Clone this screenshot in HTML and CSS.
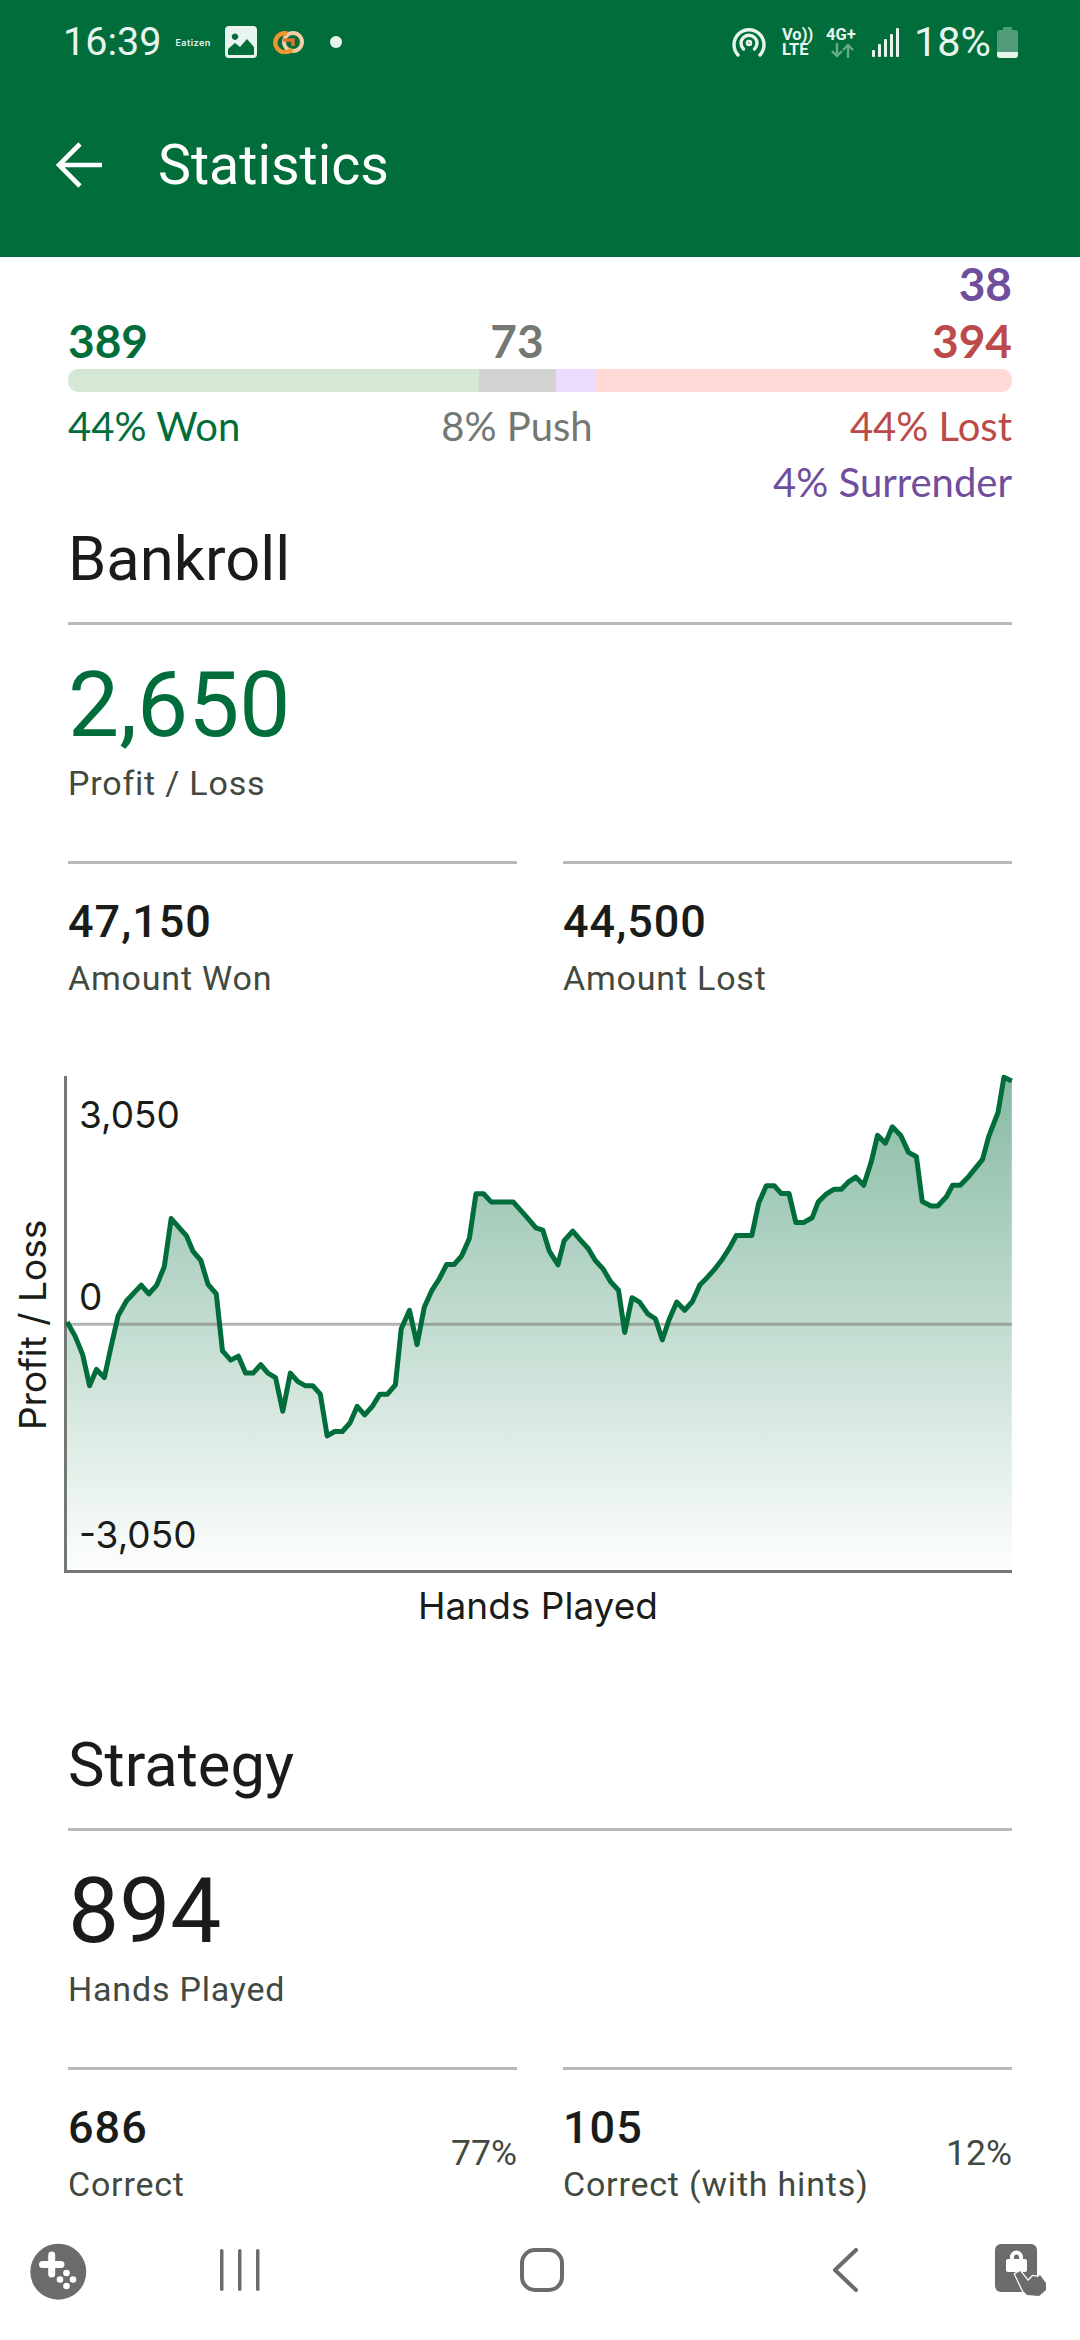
FILE: index.html
```html
<!DOCTYPE html>
<html lang="en">
<head>
    <meta charset="UTF-8">
    <meta name="viewport" content="width=device-width, initial-scale=1.0">
    <title>Statistics</title>
    <link rel="stylesheet" href="styles.css">
</head>
<body>
    <header class="app-header">
        <div class="status-bar">
            <div class="status-left">
                <span class="clock">16:39</span>
                <span class="eatizen">Eatizen</span>
                <svg class="ic-gallery" viewBox="0 0 32 32"><path fill="#e8f5ee" fill-rule="evenodd" d="M4 0h24a4 4 0 0 1 4 4v24a4 4 0 0 1-4 4H4a4 4 0 0 1-4-4V4a4 4 0 0 1 4-4zM3 23v5a1 1 0 0 0 1 1h24a1 1 0 0 0 1-1v-7l-7-8-7 8-5-4zM10 7.500a3.200 3.200 0 1 0 .01 0z"/></svg>
                <svg class="ic-rings" viewBox="0 0 32 24">
                    <circle cx="21" cy="12" r="9" fill="none" stroke="#f5cda5" stroke-width="4"/>
                    <path d="M15 3.500a9.500 9.500 0 1 0 5 15.500" fill="none" stroke="#f0962e" stroke-width="4.500"/>
                    <path d="M11 10h10v6" fill="none" stroke="#e8702a" stroke-width="3.500"/>
                </svg>
                <span class="dot"></span>
            </div>
            <div class="status-right">
                <svg class="ic-hotspot" viewBox="0 0 34 30" fill="none" stroke="#e8f5ee" stroke-width="3.400" stroke-linecap="round">
                    <path d="M6 28a15 15 0 1 1 22 0"/>
                    <path d="M11.500 22a8 8 0 1 1 11 0"/>
                    <circle cx="17" cy="16" r="2" stroke-width="2.500"/>
                </svg>
                <div class="volte"><span>Vo))</span><span>LTE</span></div>
                <div class="net">
                    <span>4G+</span>
                    <svg class="ic-arrows" viewBox="0 0 24 15" fill="none" stroke="#e8f5ee" stroke-opacity=".45" stroke-width="2.400"><path d="M7 0v13M2 8l5 5 5-5"/><path d="M18 15V2M13 7l5-5 5 5"/></svg>
                </div>
                <svg class="ic-signal" viewBox="0 0 27 29" fill="#e8f5ee">
                    <rect x="0" y="22" width="3" height="7" rx="1"/>
                    <rect x="6" y="16" width="3" height="13" rx="1"/>
                    <rect x="12" y="11" width="3" height="18" rx="1"/>
                    <rect x="18" y="6" width="3" height="23" rx="1"/>
                    <rect x="24" y="0" width="3" height="29" rx="1"/>
                </svg>
                <span class="battery-text">18%</span>
                <svg class="ic-battery" viewBox="0 0 21 31"><path fill="#e8f5ee" fill-opacity=".35" d="M7 0h7a1 1 0 0 1 1 1v2h3a3 3 0 0 1 3 3v19H0V6a3 3 0 0 1 3-3h3V1a1 1 0 0 1 1-1z"/><path fill="#e8f5ee" d="M0 25h21v3a3 3 0 0 1-3 3H3a3 3 0 0 1-3-3z"/></svg>
            </div>
        </div>
        <div class="toolbar">
            <svg class="ic-back" viewBox="0 0 46 46" fill="none" stroke="#fff" stroke-width="4.600"><path d="M46 23H4M24 2L3 23l21 21"/></svg>
            <h1>Statistics</h1>
        </div>
    </header>

    <main class="content">
        <section class="results">
            <div class="count-solo purple">38</div>
            <div class="result-row counts">
                <span class="green">389</span>
                <span class="grey mid">73</span>
                <span class="red end">394</span>
            </div>
            <div class="result-bar">
                <span class="seg seg-won"></span>
                <span class="seg seg-push"></span>
                <span class="seg seg-surrender"></span>
                <span class="seg seg-lost"></span>
            </div>
            <div class="result-row percents">
                <span class="green">44% Won</span>
                <span class="grey mid">8% Push</span>
                <span class="red end">44% Lost</span>
            </div>
            <div class="percent-solo purple">4% Surrender</div>
        </section>

        <section class="stat-section bankroll">
            <h2>Bankroll</h2>
            <div class="stat-main">
                <div class="big-value green">2,650</div>
                <div class="stat-label">Profit / Loss</div>
            </div>
            <div class="stat-pair">
                <div class="stat-cell">
                    <div class="cell-text">
                        <div class="cell-value">47,150</div>
                        <div class="stat-label">Amount Won</div>
                    </div>
                </div>
                <div class="stat-cell">
                    <div class="cell-text">
                        <div class="cell-value">44,500</div>
                        <div class="stat-label">Amount Lost</div>
                    </div>
                </div>
            </div>
        </section>

        <section class="chart">
            <div class="chart-row">
                <div class="y-title">Profit / Loss</div>
                <div class="plot">
                    <svg class="plot-svg" viewBox="194.500 46.500 2744 1336" preserveAspectRatio="none">
                        <defs>
                            <linearGradient id="areaFade" gradientUnits="userSpaceOnUse" x1="0" y1="50" x2="0" y2="1385">
                                <stop offset="0" stop-color="#006d3b" stop-opacity=".47"/>
                                <stop offset="1" stop-color="#006d3b" stop-opacity=".01"/>
                            </linearGradient>
                        </defs>
                        <polygon fill="url(#areaFade)" points="195,712 218,750 240,800 260,884 280,840 303,862 322,780 343,695 367,655 410,612 432,636 455,612 477,562 497,432 541,478 560,520 583,545 604,610 628,636 646,790 670,815 692,804 713,850 735,850 757,827 778,850 800,862 821,953 843,850 865,873 886,884 908,884 930,907 950,1020 972,1008 994,1008 1016,985 1037,940 1059,963 1081,940 1103,907 1125,907 1148,882 1165,730 1189,680 1211,773 1232,672 1254,626 1275,596 1297,556 1319,556 1341,532 1363,485 1382,365 1404,365 1426,387 1490,387 1512,410 1534,433 1556,457 1576,463 1595,520 1620,557 1638,492 1663,466 1685,490 1708,513 1728,545 1751,568 1773,603 1796,626 1814,740 1835,646 1857,658 1881,690 1903,703 1923,760 1943,705 1965,658 1988,680 2010,657 2032,612 2053,592 2076,568 2095,545 2118,512 2138,478 2183,478 2203,390 2225,343 2248,343 2268,364 2291,364 2311,443 2333,443 2358,430 2376,387 2400,365 2421,353 2443,353 2465,332 2485,320 2508,342 2530,278 2548,207 2571,228 2591,184 2616,208 2638,253 2661,265 2678,386 2703,398 2723,398 2748,373 2766,342 2788,342 2813,318 2853,272 2871,210 2898,145 2915,50 2938,60 2938,1382 195,1382"/>
                        <line class="zero-line" x1="195" y1="718" x2="2938" y2="718"/>
                        <polyline class="pl-line" points="195,712 218,750 240,800 260,884 280,840 303,862 322,780 343,695 367,655 410,612 432,636 455,612 477,562 497,432 541,478 560,520 583,545 604,610 628,636 646,790 670,815 692,804 713,850 735,850 757,827 778,850 800,862 821,953 843,850 865,873 886,884 908,884 930,907 950,1020 972,1008 994,1008 1016,985 1037,940 1059,963 1081,940 1103,907 1125,907 1148,882 1165,730 1189,680 1211,773 1232,672 1254,626 1275,596 1297,556 1319,556 1341,532 1363,485 1382,365 1404,365 1426,387 1490,387 1512,410 1534,433 1556,457 1576,463 1595,520 1620,557 1638,492 1663,466 1685,490 1708,513 1728,545 1751,568 1773,603 1796,626 1814,740 1835,646 1857,658 1881,690 1903,703 1923,760 1943,705 1965,658 1988,680 2010,657 2032,612 2053,592 2076,568 2095,545 2118,512 2138,478 2183,478 2203,390 2225,343 2248,343 2268,364 2291,364 2311,443 2333,443 2358,430 2376,387 2400,365 2421,353 2443,353 2465,332 2485,320 2508,342 2530,278 2548,207 2571,228 2591,184 2616,208 2638,253 2661,265 2678,386 2703,398 2723,398 2748,373 2766,342 2788,342 2813,318 2853,272 2871,210 2898,145 2915,50 2938,60"/>
                    </svg>
                    <span class="y-tick tick-top">3,050</span>
                    <span class="y-tick tick-zero">0</span>
                    <span class="y-tick tick-low">-3,050</span>
                </div>
            </div>
            <div class="x-title">Hands Played</div>
        </section>

        <section class="stat-section strategy">
            <h2>Strategy</h2>
            <div class="stat-main">
                <div class="big-value">894</div>
                <div class="stat-label">Hands Played</div>
            </div>
            <div class="stat-pair">
                <div class="stat-cell">
                    <div class="cell-text">
                        <div class="cell-value">686</div>
                        <div class="stat-label">Correct</div>
                    </div>
                    <span class="cell-pct">77%</span>
                </div>
                <div class="stat-cell">
                    <div class="cell-text">
                        <div class="cell-value">105</div>
                        <div class="stat-label">Correct (with hints)</div>
                    </div>
                    <span class="cell-pct">12%</span>
                </div>
            </div>
        </section>
    </main>

    <nav class="nav-bar">
        <svg class="nav-game" viewBox="0 0 80 80">
            <circle cx="38.300" cy="36.700" r="28" fill="#6b6b6b"/>
            <path d="M31.700 20v19M22.500 29.500h18.500" fill="none" stroke="#fff" stroke-width="7" stroke-linecap="round"/>
            <circle cx="46.500" cy="38" r="3.300" fill="#fff"/>
            <circle cx="40" cy="44.500" r="3.300" fill="#fff"/>
            <circle cx="53" cy="44.500" r="3.300" fill="#fff"/>
            <circle cx="46.500" cy="51" r="3.300" fill="#fff"/>
        </svg>
        <svg class="nav-recents" viewBox="0 0 40 42" fill="#6b6b6b">
            <rect x="0" y="0" width="3.500" height="42" rx="1.700"/>
            <rect x="18" y="0" width="3.500" height="42" rx="1.700"/>
            <rect x="36" y="0" width="3.500" height="42" rx="1.700"/>
        </svg>
        <svg class="nav-home" viewBox="0 0 44 44" fill="none" stroke="#6b6b6b" stroke-width="4"><rect x="2" y="2" width="40" height="40" rx="13"/></svg>
        <svg class="nav-back" viewBox="0 0 26 44" fill="none" stroke="#6b6b6b" stroke-width="4" stroke-linecap="round" stroke-linejoin="round"><path d="M24 2L3 22l21 20"/></svg>
        <svg class="nav-lock" viewBox="0 0 80 80">
            <rect x="15" y="14" width="42" height="48" rx="6" fill="#6b6b6b"/>
            <path fill="#fff" fill-rule="evenodd" d="M30 29v-2a6.500 6.500 0 0 1 13 0v2h2a2 2 0 0 1 2 2v9a2 2 0 0 1-2 2H28a2 2 0 0 1-2-2v-9a2 2 0 0 1 2-2zm4 0h5v-2a2.500 2.500 0 0 0-5 0z"/>
            <path fill="#6b6b6b" stroke="#fff" stroke-width="2.500" stroke-linejoin="round" paint-order="stroke" d="M35 44l5-3 8 10 5-5 5 1 2-2 6 8v7l-7 6-12-1-4-4z"/>
        </svg>
    </nav>
</body>
</html>
```

FILE: styles.css
```css
* {
    margin: 0;
    padding: 0;
    box-sizing: border-box;
}

html, body {
    width: 1080px;
    height: 2340px;
    overflow: hidden;
}

body {
    font-family: Roboto, sans-serif;
    background: #fff;
    color: #1a1c19;
    display: flex;
    flex-direction: column;
}

/* Colours */
.green { color: #006d3b; }
.grey { color: #747873; }
.red { color: #bb4a48; }
.purple { color: #6f4e9e; }

/* Header */
.app-header {
    height: 257px;
    flex-shrink: 0;
    background: #006d3b;
    color: #e8f5ee;
}

.status-bar {
    height: 84px;
    padding: 0 62px 0 63px;
    display: flex;
    justify-content: space-between;
    align-items: center;
}

.status-left, .status-right {
    display: flex;
    align-items: center;
}

.clock {
    font-size: 39.500px;
    line-height: 44px;
}

.eatizen {
    font-family: Inter, sans-serif;
    font-size: 9px;
    font-weight: 600;
    letter-spacing: 0.5px;
    width: 36px;
    margin-left: 14px;
    white-space: nowrap;
}

.ic-gallery {
    width: 32px;
    height: 32px;
    margin-left: 14px;
}

.ic-rings {
    width: 32px;
    height: 24px;
    margin-left: 15px;
}

.dot {
    width: 12px;
    height: 12px;
    border-radius: 50%;
    background: #e8f5ee;
    margin-left: 26px;
}

.ic-hotspot {
    width: 34px;
    height: 30px;
}

.volte {
    display: flex;
    flex-direction: column;
    width: 32px;
    margin-left: 16px;
    font-size: 16.500px;
    font-weight: 700;
    line-height: 15px;
}

.net {
    width: 34px;
    margin-left: 12px;
    display: flex;
    flex-direction: column;
    font-size: 16.500px;
    font-weight: 700;
    line-height: 15px;
}

.ic-arrows {
    width: 24px;
    height: 15px;
    margin: 1px 0 0 4px;
}

.ic-signal {
    width: 27px;
    height: 29px;
    margin-left: 12px;
}

.battery-text {
    font-size: 41.500px;
    line-height: 44px;
    margin-left: 15px;
}

.ic-battery {
    width: 21px;
    height: 31px;
    margin-left: 6px;
}

.toolbar {
    height: 162px;
    padding: 0 0 0 56px;
    display: flex;
    align-items: center;
    color: #fff;
}

.ic-back {
    width: 46px;
    height: 46px;
}

.toolbar h1 {
    font-size: 55.500px;
    font-weight: 400;
    margin-left: 56px;
}

/* Main content */
.content {
    flex: 1;
    min-height: 0;
    overflow: hidden;
    padding: 0 68px;
}

/* Won / lost summary */
.results {
    font-family: Lato, sans-serif;
}

.count-solo {
    font-size: 46px;
    font-weight: 700;
    line-height: 54px;
    text-align: right;
}

.result-row {
    display: grid;
    grid-template-columns: 399px 100px 1fr;
}

.mid {
    display: flex;
    justify-content: center;
    white-space: nowrap;
}

.end {
    text-align: right;
}

.counts {
    font-size: 46px;
    font-weight: 700;
    line-height: 54px;
    margin-top: 3px;
}

.result-bar {
    display: flex;
    height: 23px;
    margin-top: 1px;
    border-radius: 10px;
    overflow: hidden;
}

.seg-won { width: 411px; background: #d5e8d5; }
.seg-push { width: 77px; background: #d3d4d1; }
.seg-surrender { width: 40px; background: #ecdcff; }
.seg-lost { flex: 1; background: #ffdad6; }

.percents {
    font-size: 40px;
    line-height: 50px;
    margin-top: 9px;
}

.percent-solo {
    font-size: 40px;
    line-height: 50px;
    margin-top: 6px;
    text-align: right;
}

/* Stat sections */
.stat-section h2 {
    font-size: 61.500px;
    font-weight: 400;
    line-height: 70px;
    padding-bottom: 28px;
    border-bottom: 3px solid #b8bbb5;
}

.bankroll {
    margin-top: 17px;
}

.stat-main {
    padding-top: 30px;
}

.big-value {
    font-size: 91px;
    line-height: 100px;
}

.stat-label {
    font-size: 34px;
    letter-spacing: 0.8px;
    line-height: 44px;
    margin-top: 6px;
    color: #424940;
    white-space: nowrap;
}

.stat-pair {
    display: grid;
    grid-template-columns: 1fr 1fr;
    gap: 46px;
    margin-top: 56px;
}

.stat-cell {
    display: flex;
    justify-content: space-between;
    align-items: center;
    border-top: 3px solid #b8bbb5;
    padding-top: 30px;
}

.cell-value {
    font-size: 45px;
    font-weight: 500;
    letter-spacing: 1px;
    line-height: 56px;
}

.cell-pct {
    font-size: 35.500px;
    color: #424940;
}

/* Chart */
.chart {
    margin: 76px -68px 0;
    padding-right: 68px;
}

.chart-row {
    display: flex;
    align-items: stretch;
}

.y-title {
    width: 64px;
    padding-right: 8px;
    writing-mode: vertical-rl;
    transform: rotate(180deg);
    text-align: center;
    font-family: Inter, sans-serif;
    font-size: 37px;
    line-height: 50px;
}

.plot {
    flex: 1;
    height: 497px;
    position: relative;
    border-left: 3px solid #747873;
    border-bottom: 3px solid #747873;
}

.plot-svg {
    display: block;
    width: 100%;
    height: 100%;
    overflow: visible;
}

.zero-line {
    stroke: #747873;
    stroke-opacity: .55;
    stroke-width: 3px;
    vector-effect: non-scaling-stroke;
}

.pl-line {
    fill: none;
    stroke: #006d3b;
    stroke-width: 5px;
    stroke-linejoin: round;
    vector-effect: non-scaling-stroke;
}

.y-tick {
    position: absolute;
    left: 12px;
    font-family: Inter, sans-serif;
    font-size: 37px;
    line-height: 40px;
    white-space: nowrap;
}

.tick-top { top: 19px; }
.tick-zero { top: 201px; }
.tick-low { top: 439px; }

.x-title {
    margin-left: 64px;
    text-align: center;
    font-family: Inter, sans-serif;
    font-size: 37px;
    line-height: 50px;
    margin-top: 8px;
}

.strategy {
    margin-top: 99px;
}

/* Bottom navigation */
.nav-bar {
    height: 120px;
    flex-shrink: 0;
    background: #fff;
    display: flex;
    align-items: center;
    padding-bottom: 20px;
}

.nav-game {
    width: 80px;
    height: 80px;
    margin: 10px 0 0 20px;
}

.nav-recents {
    width: 40px;
    height: 42px;
    margin-left: 120px;
}

.nav-home {
    width: 44px;
    height: 44px;
    margin-left: 260px;
}

.nav-back {
    width: 26px;
    height: 44px;
    margin-left: 268px;
}

.nav-lock {
    width: 80px;
    height: 80px;
    margin-left: 122px;
}
```
